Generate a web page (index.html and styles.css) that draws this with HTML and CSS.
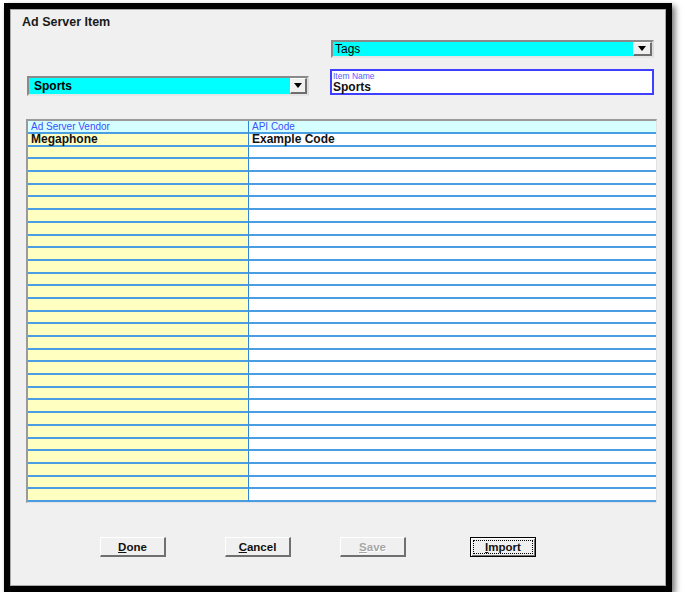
FILE: index.html
```html
<!DOCTYPE html>
<html>
<head>
<meta charset="utf-8">
<link rel="stylesheet" href="styles.css">
</head>
<body>
<div class="frame">
  <div class="win">
    <div class="title">Ad Server Item</div>
    <div class="tags-row">
      <div class="combo tags">
        <span class="combo-text">Tags</span>
        <span class="arrow-btn"><span class="tri"></span></span>
      </div>
    </div>
    <div class="sel-row">
      <div class="combo sports">
        <span class="combo-text bold">Sports</span>
        <span class="arrow-btn"><span class="tri"></span></span>
      </div>
      <div class="namebox">
        <div class="name-label">Item Name</div>
        <div class="name-value">Sports</div>
      </div>
    </div>
    <div class="grid" id="grid">
      <div class="cell c1 head">Ad Server Vendor</div>
      <div class="cell c2 head">API Code</div>
      <div class="cell c1 data">Megaphone</div>
      <div class="cell c2 data">Example Code</div>
    </div>
    <div class="buttons">
      <button class="btn"><u>D</u>one</button>
      <button class="btn"><u>C</u>ancel</button>
      <button class="btn disabled"><u>S</u>ave</button>
      <button class="btn default"><span class="focus"><u>I</u>mport</span></button>
    </div>
  </div>
</div>
<script>
  var g = document.getElementById('grid');
  for (var i = 0; i < 28; i++) {
    var a = document.createElement('div'); a.className = 'cell c1';
    var b = document.createElement('div'); b.className = 'cell c2';
    g.appendChild(a); g.appendChild(b);
  }
</script>
</body>
</html>
```
FILE: styles.css
```css
html, body {
  margin: 0;
  padding: 0;
  background: #ffffff;
}
body {
  font-family: "Liberation Sans", Arial, sans-serif;
  color: #000;
}
.frame {
  margin: 3px 0 0 4px;
  width: 656px;
  height: 577px;
  border: 6px solid #000;
  box-shadow: 3px 3px 6px rgba(0, 0, 0, 0.55);
}
.win {
  box-sizing: border-box;
  width: 656px;
  height: 577px;
  background: #f0f0f0;
  border: 1px solid #a8a8a8;
  display: flex;
  flex-direction: column;
}
.title {
  margin: 5px 0 0 11px;
  font-size: 12.5px;
  font-weight: bold;
  line-height: 14px;
  height: 14px;
  color: #1a1a1a;
}
.tags-row {
  margin: 11px 0 0 320px;
  display: flex;
}
.combo {
  box-sizing: border-box;
  background: #00ffff;
  border-style: solid;
  border-width: 2px;
  border-color: #8a8a8a #dcdcdc #e6e6e6 #8a8a8a;
  display: flex;
  align-items: center;
  justify-content: space-between;
}
.tags {
  width: 323px;
  height: 18px;
}
.combo-text {
  font-size: 12px;
  line-height: 14px;
  padding-left: 2px;
}
.bold { font-weight: bold; padding-left: 5px; }
.arrow-btn {
  box-sizing: border-box;
  width: 19px;
  height: 14px;
  background: #f0f0f0;
  border-style: solid;
  border-width: 1px 2px 2px 1px;
  border-color: #ffffff #6e6e6e #6e6e6e #ffffff;
  display: flex;
  align-items: center;
  justify-content: center;
}
.tri {
  width: 0;
  height: 0;
  border-left: 4px solid transparent;
  border-right: 4px solid transparent;
  border-top: 5px solid #000;
}
.sel-row {
  margin: 11px 0 0 16px;
  display: flex;
  align-items: flex-end;
}
.sports {
  width: 282px;
  height: 20px;
  margin-bottom: -1px;
}
.sports .arrow-btn {
  width: 17px;
  height: 16px;
}
.namebox {
  box-sizing: border-box;
  margin-left: 21px;
  width: 324px;
  height: 26px;
  background: #ffffff;
  border: 2px solid #3f3fff;
  padding: 1px 0 0 1px;
}
.name-label {
  font-size: 8.5px;
  line-height: 9px;
  color: #5a5aff;
}
.name-value {
  font-size: 12px;
  font-weight: bold;
  line-height: 12px;
  color: #111;
}
.grid {
  box-sizing: border-box;
  margin: 24px 0 0 15px;
  width: 631px;
  height: 384px;
  border-style: solid;
  border-width: 2px 1px 1px 2px;
  border-color: #9a9a9a #e2e2e2 #e2e2e2 #9a9a9a;
  display: grid;
  grid-template-columns: 221px 1fr;
  grid-template-rows: 13px repeat(29, 12.69px);
  background: #ffffff;
  overflow: hidden;
}
.cell {
  box-sizing: border-box;
  border-bottom: 2px solid #4a9de2;
  background: #ffffff;
  overflow: visible;
  white-space: nowrap;
}
.c1 {
  background: #ffffc2;
  border-right: 1px solid #2f86d6;
}
.head {
  background: #d6ffff;
  color: #3a50ff;
  font-size: 10px;
  line-height: 11px;
  padding-left: 3px;
}
.data {
  font-size: 12px;
  font-weight: bold;
  line-height: 11px;
  padding-left: 3px;
  color: #111;
}
.buttons {
  margin: 34px 0 0 89px;
  display: flex;
  gap: 59px;
}
.buttons .btn:nth-child(3) { margin-left: -10px; }
.buttons .btn:nth-child(4) { margin-left: 5px; }
.btn {
  box-sizing: border-box;
  width: 66px;
  height: 20px;
  padding: 0;
  background: #f0f0f0;
  border-style: solid;
  border-width: 1px 2px 2px 1px;
  border-color: #ffffff #707070 #707070 #ffffff;
  font-family: "Liberation Sans", Arial, sans-serif;
  font-size: 11.5px;
  font-weight: bold;
  color: #111;
  display: flex;
  align-items: center;
  justify-content: center;
}
.btn.disabled {
  color: #a6a6a6;
  text-shadow: 1px 1px 0 #ffffff;
}
.btn.default {
  border: 1px solid #000;
  box-shadow: inset 1px 1px 0 #ffffff, inset -1px -1px 0 #707070;
}
.focus {
  box-sizing: border-box;
  width: 60px;
  height: 14px;
  border: 1px dotted #000;
  display: flex;
  align-items: center;
  justify-content: center;
  line-height: 12px;
}
```
